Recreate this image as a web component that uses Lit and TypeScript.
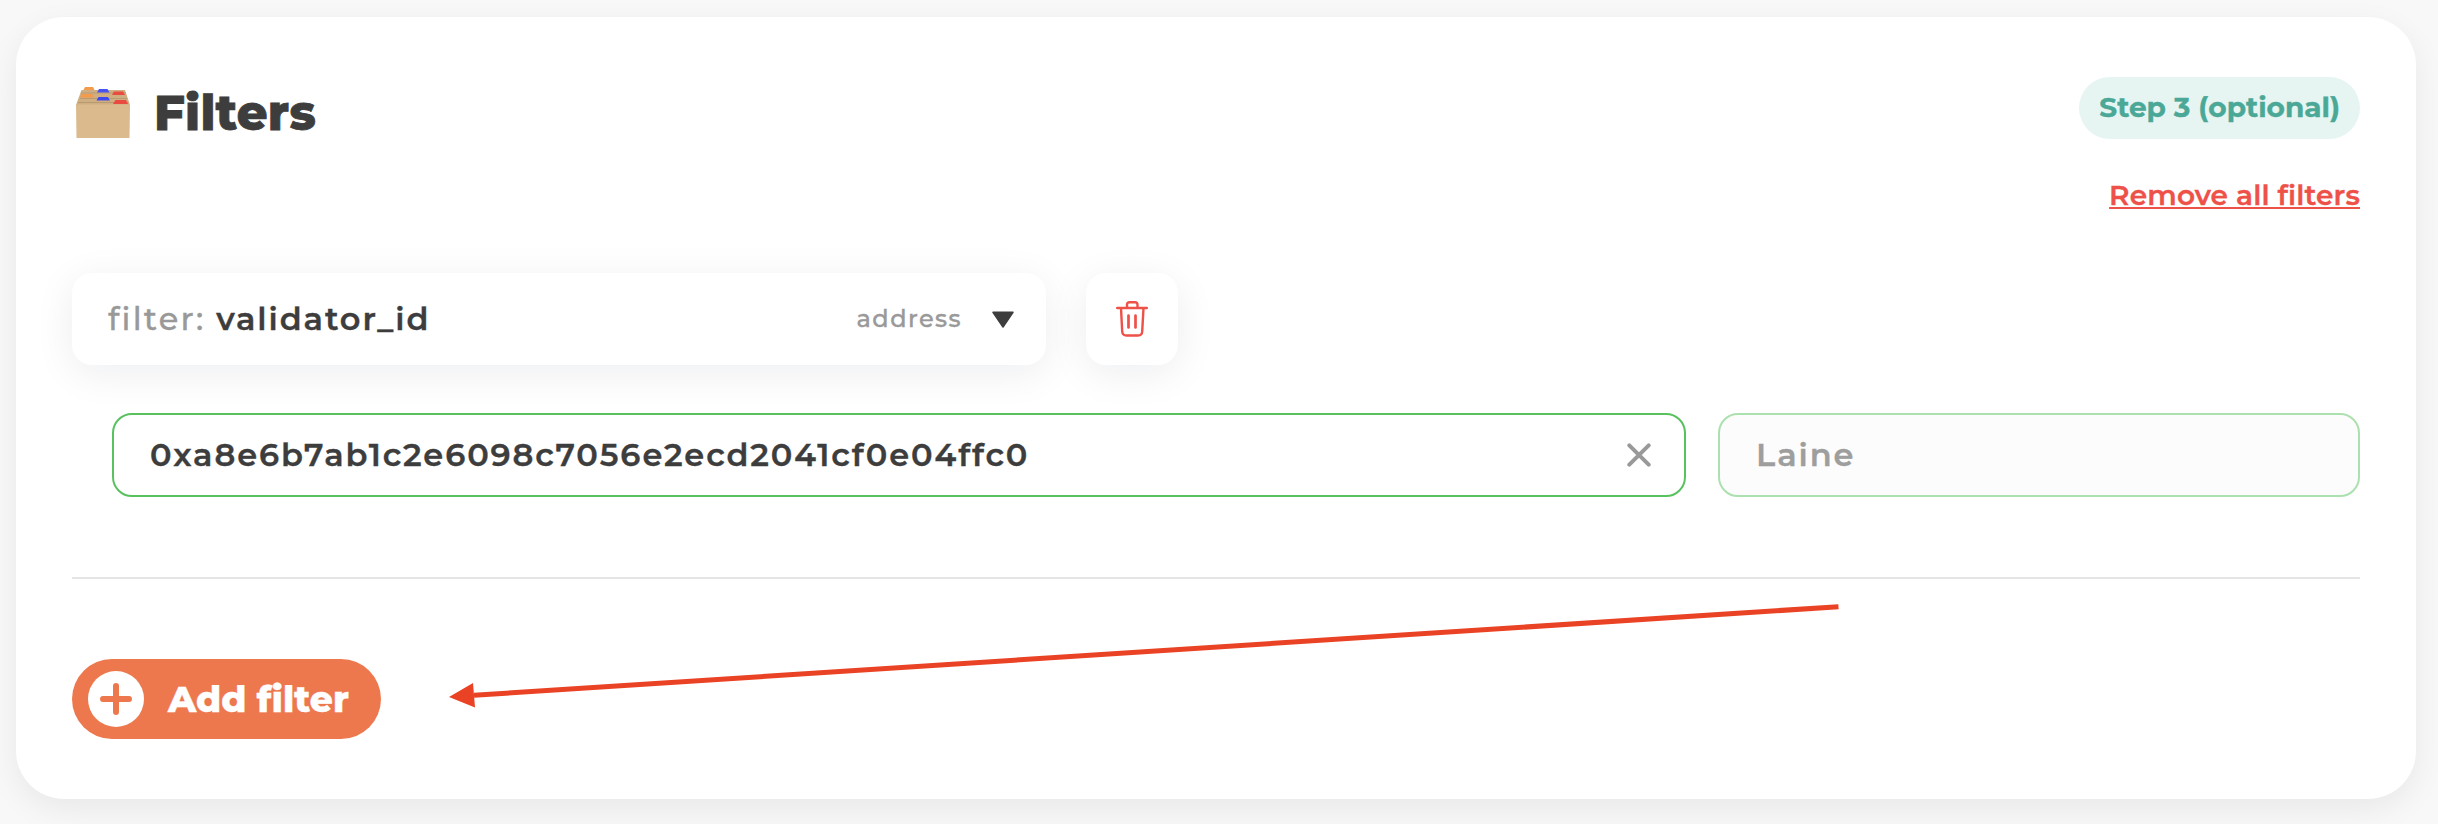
import { LitElement, html, css } from "lit";
import { customElement } from "lit/decorators.js";

@customElement("app-root")
export class AppRoot extends LitElement {
  static styles = css`
    :host { display: block; box-sizing: border-box; height: 824px; padding: 17px 22px 25px 16px; overflow: hidden; position: relative;
      background: #f8f8f8; font-family: "Montserrat", "Inter", sans-serif; color: #3d3d3d; -webkit-text-stroke: 0.35px; }
    * { box-sizing: border-box; }
    svg { display: block; flex: none; }
    .card { height: 782px; border-radius: 48px; background: #fff; padding: 60px 56px;
      box-shadow: 0 10px 32px rgba(0, 20, 30, 0.065); }
    .head { display: flex; justify-content: space-between; align-items: flex-start; height: 135px; }
    .title { display: flex; align-items: center; height: 72px; padding-left: 4px; gap: 24px; }
    h2 { margin: 0; font-size: 48px; line-height: 58px; font-weight: 800; letter-spacing: 0.3px; -webkit-text-stroke: 0.8px; }
    .side { display: flex; flex-direction: column; align-items: flex-end; gap: 39px; }
    .pill { height: 62px; line-height: 61px; padding: 0 20px; border-radius: 31px; background: #e6f5f2; color: #4ba897;
      font-size: 28px; font-weight: 700; white-space: nowrap; }
    .remove { font-size: 28px; line-height: 34px; font-weight: 600; color: #ee5148; letter-spacing: 0.14px;
      text-decoration: underline; text-decoration-thickness: 2px; text-underline-offset: 2px; text-decoration-skip-ink: none; }
    .row { display: flex; gap: 40px; height: 92px; margin-top: 61px; }
    .box { border-radius: 20px; background: #fff; box-shadow: 0 8px 40px rgba(20, 30, 60, 0.075); display: flex; align-items: center; }
    .select { width: 974px; padding: 0 32px 0 36px; font-size: 32px; letter-spacing: 1.92px; white-space: pre; }
    .label, .value { padding-bottom: 2px; }
    .label { color: #999; font-weight: 500; letter-spacing: 2.25px; }
    .value { font-weight: 600; flex: 1; }
    .type { font-size: 24px; font-weight: 500; color: #999; letter-spacing: 1.44px; margin-right: 30px; padding-bottom: 1px; }
    .trash { width: 92px; justify-content: center; }
    .inputs { display: flex; gap: 32px; height: 84px; margin: 48px 0 80px 40px; }
    .field { border: 2px solid #5ac15f; border-radius: 20px; display: flex; align-items: center; justify-content: space-between;
      font-size: 32px; font-weight: 600; letter-spacing: 1.92px; }
    .field span { padding-bottom: 2px; }
    .addr { width: 1574px; padding: 0 33px 0 36px; }
    .name { flex: 1; padding: 0 36px; background: #fcfcfc; border-color: #ade0af; color: #9e9e9e; }
    .rule { height: 2px; background: #e5e5e5; margin-bottom: 80px; }
    .add { display: flex; align-items: center; width: 309px; height: 80px; padding-left: 16px; gap: 24px; border-radius: 40px;
      background: #ed784e; color: #fff; font-size: 36px; font-weight: 800; white-space: nowrap; }
    .arrow { position: absolute; left: 440px; top: 590px; }
  `;

  render() {
    return html`
      <section class="card">
        <div class="head">
          <div class="title">
            <svg width="54" height="52" viewBox="0 0 54 52">
              <path d="M5.500 3H49L54 18H0Z" fill="#cfae82" />
              <path d="M5 6H50M4 11.500H51M2 15.500H52" stroke="#b99b72" stroke-width="1" />
              <path d="M7.500 3L9 0H17L18.500 3Z" fill="#f39a4b" />
              <path d="M21 5.500L23 2H31.500L33.500 5.500Z" fill="#4553f2" />
              <path d="M36 8L38 4.500H47L49 8Z" fill="#ea4b40" />
              <path d="M4 10.500L6 7H16L18 10.500Z" fill="#f39a4b" />
              <path d="M20.500 13.500L22.500 10H32L34 13.500Z" fill="#3c49f0" />
              <path d="M37 17L39.500 13H50L52 17Z" fill="#ea4b40" />
              <path d="M0 17.500H54L53.500 51H0.500Z" fill="#dbba8e" />
            </svg>
            <h2>Filters</h2>
          </div>
          <div class="side">
            <div class="pill">Step 3 (optional)</div>
            <a class="remove">Remove all filters</a>
          </div>
        </div>
        <div class="row">
          <div class="box select">
            <span class="label">filter: </span><span class="value">validator_id</span>
            <span class="type">address</span>
            <svg width="22" height="17" viewBox="0 0 22 17"><path d="M1 1.300H21L11 16Z" fill="#3d3d3d" stroke="#3d3d3d" stroke-width="1.500" stroke-linejoin="round" /></svg>
          </div>
          <div class="box trash">
            <svg width="32" height="36" viewBox="0 0 32 36" fill="none" stroke="#ee5148" stroke-width="2.400" stroke-linecap="round" stroke-linejoin="round">
              <path d="M1.200 7H30.800M11 7V3.500Q11 1.200 13.500 1.200H19Q21.500 1.200 21.500 3.500V7M5 7L6.200 30.500Q6.500 34.500 10.500 34.500H22Q26 34.500 26.200 30.500L27.500 7" />
              <path d="M12.500 14.500V26.500M19.500 14.500V26.500" stroke-width="2.700" />
            </svg>
          </div>
        </div>
        <div class="inputs">
          <div class="field addr">
            <span>0xa8e6b7ab1c2e6098c7056e2ecd2041cf0e04ffc0</span>
            <svg width="24" height="24" viewBox="0 0 24 24" stroke="#999" stroke-width="4" stroke-linecap="round"><path d="M2.300 2.300L21.700 21.700M21.700 2.300L2.300 21.700" /></svg>
          </div>
          <div class="field name"><span>Laine</span></div>
        </div>
        <div class="rule"></div>
        <div class="add">
          <svg width="56" height="56" viewBox="0 0 56 56"><circle cx="28" cy="28" r="28" fill="#fff" /><path d="M28 15V41M15 28H41" stroke="#ed784e" stroke-width="6" stroke-linecap="round" /></svg>
          <span>Add filter</span>
        </div>
      </section>
      <svg class="arrow" width="1410" height="130" viewBox="440 590 1410 130">
        <path d="M474 695.300L1838.500 606.700" stroke="#ea4224" stroke-width="5" />
        <path d="M449 697L473 683L475 707.500Z" fill="#ea4224" />
      </svg>
    `;
  }
}
